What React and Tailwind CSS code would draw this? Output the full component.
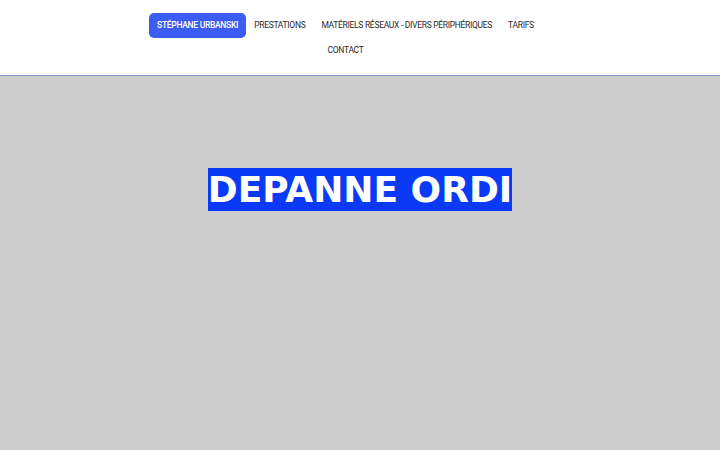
export default function App() {
  const items = ['PRESTATIONS', 'MATÉRIELS RÉSEAUX - DIVERS PÉRIPHÉRIQUES', 'TARIFS', 'CONTACT'];

  return (
    <div className="w-[720px] h-[450px] flex flex-col bg-[#cccccc]" style={{ fontFamily: 'Roboto, "Liberation Sans", sans-serif' }}>
      <header className="h-[76px] bg-white border-b border-[#8e94c8] pt-[13px] flex justify-center pr-[29px]">
        <nav className="w-[410px] flex flex-wrap content-start justify-center">
          <a className="h-[25px] px-2 flex items-center rounded-[5px] bg-[#3d5cf1] text-white text-[8.5px] font-medium tracking-[-0.3px]">
            STÉPHANE URBANSKI
          </a>
          {items.map(item => (
            <a key={item} className="h-[25px] px-2 flex items-center text-[#2a2a2a] text-[8.5px] tracking-[-0.3px]">
              {item}
            </a>
          ))}
        </nav>
      </header>

      <div className="flex-1 pt-[86px] text-center">
        <h1 className="text-[36px] font-bold text-white py-[1px]" style={{ fontFamily: '"DejaVu Sans", sans-serif' }}>
          <span className="bg-[#0a3af5] py-[1px]">DEPANNE ORDI</span>
        </h1>
      </div>
    </div>
  );
}
